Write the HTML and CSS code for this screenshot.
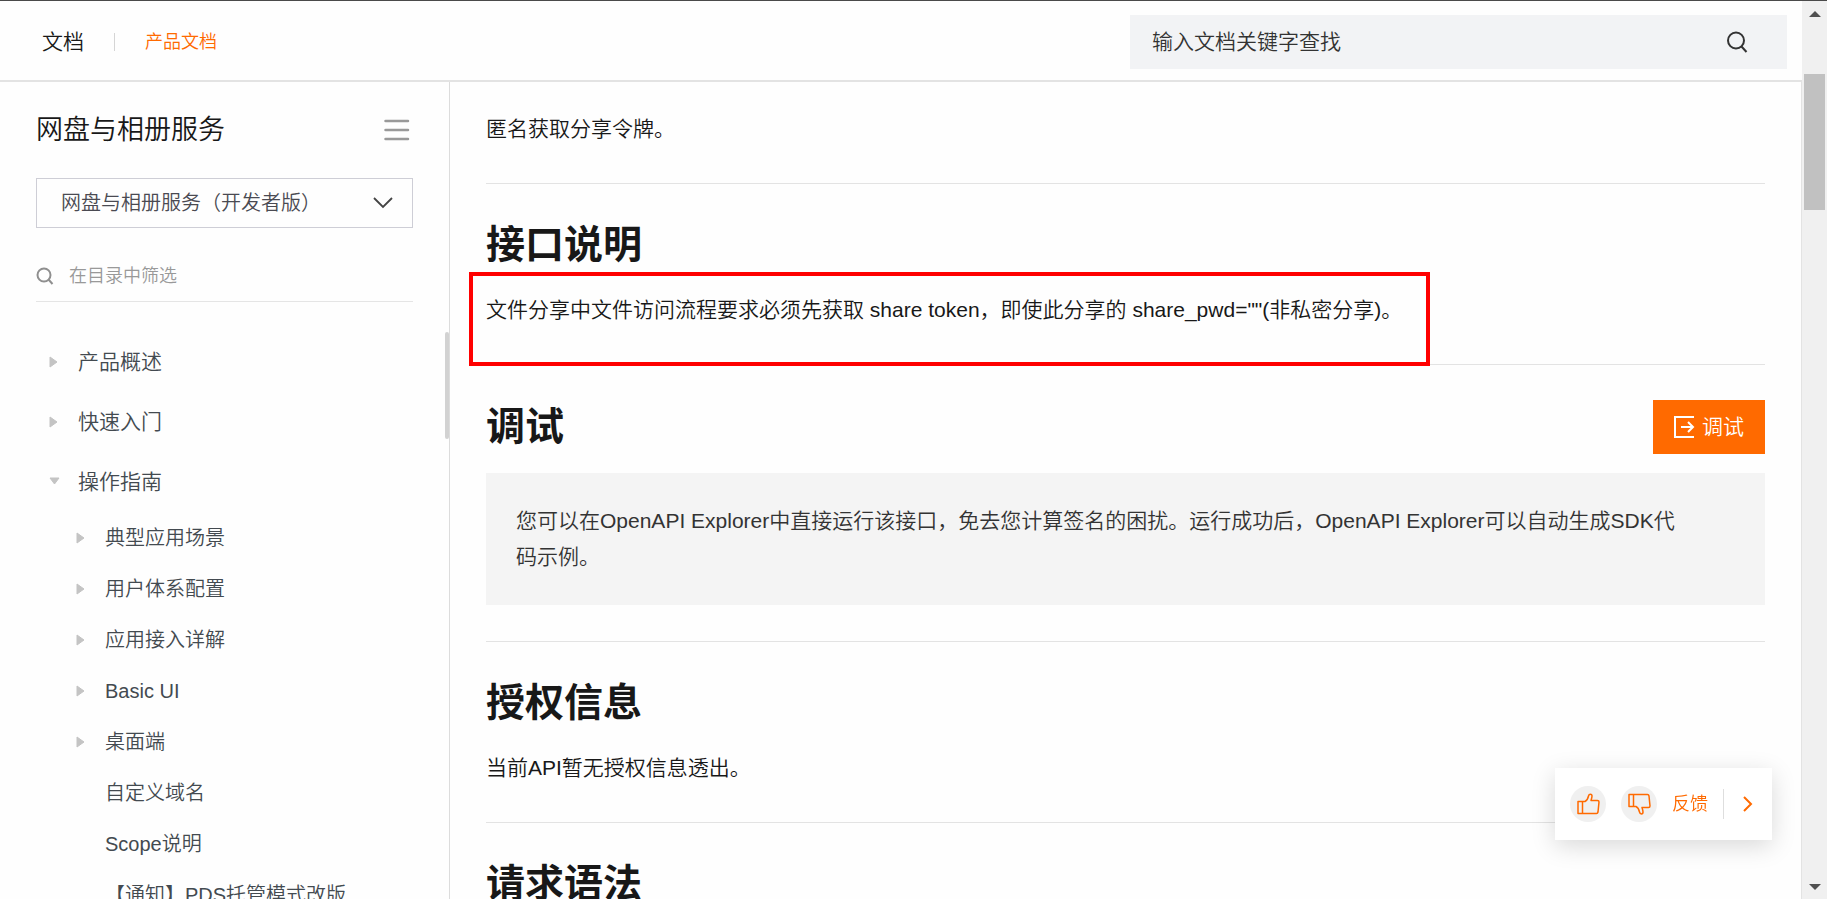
FILE: index.html
```html
<!DOCTYPE html>
<html lang="zh-CN">
<head>
<meta charset="utf-8">
<meta name="viewport" content="width=device-width, initial-scale=1">
<title>网盘与相册服务</title>
<link rel="stylesheet" href="styles.css">
</head>
<body>
<div class="window">
  <div class="page">
    <header class="topbar">
      <nav class="crumbs">
        <a class="crumb-home" href="#">文档</a>
        <span class="crumb-divider"></span>
        <a class="crumb-current" href="#">产品文档</a>
      </nav>
      <form class="search">
        <input class="search-input" type="text" placeholder="输入文档关键字查找" aria-label="输入文档关键字查找">
        <button class="icon-button" type="button" aria-label="搜索">
          <svg width="22" height="22" viewBox="0 0 22 22" fill="none" stroke="#333" stroke-width="2"><circle cx="10" cy="9.500" r="8"/><path d="M15.500 15.500l5 5.500"/></svg>
        </button>
      </form>
    </header>
    <div class="columns">
      <aside class="sidebar">
        <div class="side-head">
          <h1 class="side-title">网盘与相册服务</h1>
          <button class="icon-button" type="button" aria-label="收起目录">
            <svg width="26" height="22" viewBox="0 0 26 22" stroke="#999" stroke-width="2.500" stroke-linecap="round"><path d="M1.500 2h22.500M1.500 11h22.500M1.500 20h22.500"/></svg>
          </button>
        </div>
        <div class="version">
          <select class="version-select" aria-label="版本">
            <option>网盘与相册服务（开发者版）</option>
          </select>
          <svg class="version-arrow" width="20" height="12" viewBox="0 0 20 12" fill="none" stroke="#444" stroke-width="1.800"><path d="M1 1l9 9 9-9"/></svg>
        </div>
        <div class="filter">
          <svg width="18" height="18" viewBox="0 0 18 18" fill="none" stroke="#8f8f8f" stroke-width="2"><circle cx="8" cy="8" r="6.500"/><path d="M12.500 12.500l4 4.500"/></svg>
          <input class="filter-input" type="text" placeholder="在目录中筛选" aria-label="在目录中筛选">
        </div>
        <nav class="tree">
          <a class="node" href="#"><span class="mark"><svg width="10" height="12" viewBox="0 0 10 12"><path class="caret" d="M1 1l7 5-7 5z"/></svg></span>产品概述</a>
          <a class="node" href="#"><span class="mark"><svg width="10" height="12" viewBox="0 0 10 12"><path class="caret" d="M1 1l7 5-7 5z"/></svg></span>快速入门</a>
          <a class="node" href="#"><span class="mark"><svg width="12" height="10" viewBox="0 0 12 10"><path class="caret" d="M1 1h9l-4.500 6z"/></svg></span>操作指南</a>
          <a class="node child" href="#"><span class="mark"><svg width="10" height="12" viewBox="0 0 10 12"><path class="caret" d="M1 1l7 5-7 5z"/></svg></span>典型应用场景</a>
          <a class="node child" href="#"><span class="mark"><svg width="10" height="12" viewBox="0 0 10 12"><path class="caret" d="M1 1l7 5-7 5z"/></svg></span>用户体系配置</a>
          <a class="node child" href="#"><span class="mark"><svg width="10" height="12" viewBox="0 0 10 12"><path class="caret" d="M1 1l7 5-7 5z"/></svg></span>应用接入详解</a>
          <a class="node child" href="#"><span class="mark"><svg width="10" height="12" viewBox="0 0 10 12"><path class="caret" d="M1 1l7 5-7 5z"/></svg></span>Basic UI</a>
          <a class="node child" href="#"><span class="mark"><svg width="10" height="12" viewBox="0 0 10 12"><path class="caret" d="M1 1l7 5-7 5z"/></svg></span>桌面端</a>
          <a class="node child" href="#"><span class="mark"></span>自定义域名</a>
          <a class="node child" href="#"><span class="mark"></span>Scope说明</a>
          <a class="node child" href="#"><span class="mark"></span>【通知】PDS托管模式改版</a>
        </nav>
        <span class="side-thumb"></span>
      </aside>
      <main class="article">
        <p class="text">匿名获取分享令牌。</p>
        <section class="section">
          <h2 class="heading">接口说明</h2>
          <p class="text marked">文件分享中文件访问流程要求必须先获取 share token，即使此分享的 share_pwd=""(非私密分享)。</p>
        </section>
        <section class="section">
          <div class="heading-row">
            <h2 class="heading">调试</h2>
            <button class="debug-button" type="button">
              <svg width="21" height="22" viewBox="0 0 21 22" fill="none" stroke="#fff" stroke-width="2"><path d="M20 1H1v20h19M7 11h12M14 6l5 5-5 5"/></svg>
              调试
            </button>
          </div>
          <p class="note">您可以在OpenAPI Explorer中直接运行该接口，免去您计算签名的困扰。运行成功后，OpenAPI Explorer可以自动生成SDK代码示例。</p>
        </section>
        <section class="section">
          <h2 class="heading">授权信息</h2>
          <p class="text">当前API暂无授权信息透出。</p>
        </section>
        <section class="section">
          <h2 class="heading">请求语法</h2>
        </section>
      </main>
    </div>
    <div class="feedback">
      <button class="round" type="button" aria-label="有帮助">
        <svg width="24" height="24" viewBox="0 0 24 24" fill="none" stroke="#ff6a00" stroke-width="1.500" stroke-linejoin="round"><path d="M2 9.500h4.500v12H2zM6.500 9.500h2.500c2-1 3-3 3.500-5.500.5-2.500 3.500-2.500 3.500 0 0 1.500-.5 3-1 4.500h6.500c1 0 1.500.7 1.500 1.500l-1 10c-.2 1-.8 1.500-1.500 1.500H6.500"/></svg>
      </button>
      <button class="round" type="button" aria-label="没帮助">
        <svg width="24" height="24" viewBox="0 0 24 24" fill="none" stroke="#ff6a00" stroke-width="1.500" stroke-linejoin="round"><path d="M2 14.500h4.500v-12H2zM6.500 14.500h2.500c2 1 3 3 3.500 5.500.5 2.500 3.500 2.500 3.500 0 0-1.500-.5-3-1-4.500h6.500c1 0 1.500-.7 1.500-1.500l-1-10c-.2-1-.8-1.500-1.500-1.500H6.500"/></svg>
      </button>
      <a class="feedback-link" href="#">反馈</a>
      <span class="feedback-divider"></span>
      <button class="icon-button" type="button" aria-label="收起">
        <svg width="12" height="18" viewBox="0 0 12 18" fill="none" stroke="#ff6a00" stroke-width="2"><path d="M2 2l7 7-7 7"/></svg>
      </button>
    </div>
  </div>
  <div class="scrollbar">
    <svg width="12" height="6" viewBox="0 0 12 6"><path fill="#505050" d="M6 0l6 6H0z"/></svg>
    <span class="thumb"></span>
    <svg class="scroll-down" width="12" height="6" viewBox="0 0 12 6"><path fill="#505050" d="M6 6l6-6H0z"/></svg>
  </div>
</div>
</body>
</html>
```

FILE: styles.css
```css
*,
*::after {
  box-sizing: border-box;
}

body {
  margin: 0;
  background: #fefefe;
  color: #181818;
  font-family: "Liberation Sans", "Noto Sans CJK SC", sans-serif;
  font-weight: 350;
  font-size: 21px;
  line-height: 36px;
}

h1, h2, p {
  margin: 0;
}

a {
  color: inherit;
  text-decoration: none;
}

button, input, select {
  padding: 0;
  border: 0;
  background: none;
  color: inherit;
  font: inherit;
}

svg {
  display: block;
  flex: none;
}

.window {
  display: flex;
  height: 100vh;
  overflow: hidden;
  border-top: 1px solid #4a4a4a;
}

.page {
  display: flex;
  flex: 1;
  flex-direction: column;
  min-width: 0;
}

.topbar {
  display: flex;
  flex: none;
  align-items: center;
  justify-content: space-between;
  height: 81px;
  padding: 3px 15px 0 42px;
  border-bottom: 2px solid #e3e3e3;
}

.crumbs {
  display: flex;
  align-items: center;
  gap: 30px;
}

.crumb-divider {
  width: 1px;
  height: 18px;
  background: #d5d5d5;
}

.crumb-current {
  color: #ff6a00;
  font-size: 18px;
}

.search {
  display: flex;
  align-items: center;
  width: 657px;
  height: 54px;
  padding: 0 39px 0 22px;
  background: #f2f3f5;
}

.search-input {
  flex: 1;
  min-width: 0;
  color: #333;
}

input::placeholder {
  color: inherit;
  opacity: 1;
}

.columns {
  display: flex;
  flex: 1;
  min-height: 0;
}

.sidebar {
  position: relative;
  flex: none;
  width: 450px;
  padding: 30px 36px 0;
  overflow: hidden;
  border-right: 1px solid #dcdcdc;
}

.side-head {
  display: flex;
  align-items: center;
  justify-content: space-between;
  height: 36px;
  padding-right: 3px;
}

.side-title {
  font-size: 27px;
  font-weight: 350;
}

.version {
  display: grid;
  align-items: center;
  margin-top: 30px;
}

.version-select {
  grid-area: 1 / 1;
  height: 50px;
  padding: 0 24px;
  border: 1px solid #ceced6;
  appearance: none;
  color: #4a4a52;
  font-size: 20px;
}

.version-arrow {
  grid-area: 1 / 1;
  justify-self: end;
  margin-right: 20px;
  pointer-events: none;
}

.filter {
  display: flex;
  align-items: center;
  gap: 15px;
  height: 54px;
  margin-top: 20px;
  padding-top: 2px;
  border-bottom: 1px solid #e5e5e5;
}

.filter-input {
  flex: 1;
  min-width: 0;
  color: #999;
  font-size: 18px;
}

.tree {
  margin-top: 30px;
}

.node {
  display: flex;
  align-items: center;
  height: 60px;
  padding-left: 13px;
  color: #434a50;
  white-space: nowrap;
}

.child {
  height: 51px;
  padding-left: 40px;
  font-size: 20px;
}

.mark {
  flex: none;
  width: 29px;
}

.caret {
  fill: #c4c4c4;
  stroke: #c4c4c4;
  stroke-linejoin: round;
}

.side-thumb {
  position: absolute;
  top: 250px;
  right: 0;
  width: 4px;
  height: 107px;
  border-radius: 2px;
  background: #d2d2d2;
}

.article {
  flex: 1;
  min-width: 0;
  padding: 29px 36px 0;
  overflow: hidden;
  border-right: 1px solid #e3e3e3;
}

.text {
  padding-bottom: 36px;
}

.section {
  border-top: 1px solid #e3e3e3;
  padding-top: 34px;
}

.heading {
  font-size: 39px;
  font-weight: 700;
  line-height: 54px;
}

.heading + .text {
  margin-top: 20px;
}

.marked {
  position: relative;
}

.marked::after {
  content: "";
  position: absolute;
  top: -20px;
  left: -17px;
  width: 961px;
  height: 94px;
  border: 4px solid #f00;
}

.heading-row {
  display: flex;
  align-items: flex-end;
  justify-content: space-between;
  height: 55px;
}

.debug-button {
  display: flex;
  align-items: center;
  gap: 7px;
  height: 54px;
  padding: 0 21px;
  background: #ff6a00;
  color: #fff;
}

.note {
  margin: 19px 0 36px;
  padding: 30px 84px 30px 30px;
  background: #f4f4f4;
  color: #333;
}

.feedback {
  position: fixed;
  right: 55px;
  bottom: 59px;
  display: flex;
  align-items: center;
  gap: 15px;
  height: 72px;
  padding: 0 18px 0 15px;
  background: #fff;
  box-shadow: 0 6px 24px rgba(0, 0, 0, 0.15);
}

.round {
  display: grid;
  place-items: center;
  width: 36px;
  height: 36px;
  border-radius: 50%;
  background: #f0f0f0;
}

.feedback-link {
  color: #ff6a00;
  font-size: 18px;
}

.feedback-divider {
  width: 1px;
  height: 30px;
  margin-right: 3px;
  background: #dedede;
}

.scrollbar {
  display: flex;
  flex: none;
  flex-direction: column;
  align-items: center;
  width: 25px;
  padding: 10px 0 9px;
  background: #f0f0f0;
}

.thumb {
  width: 21px;
  height: 136px;
  margin-top: 57px;
  background: #c1c1c1;
}

.scroll-down {
  margin-top: auto;
}
```
